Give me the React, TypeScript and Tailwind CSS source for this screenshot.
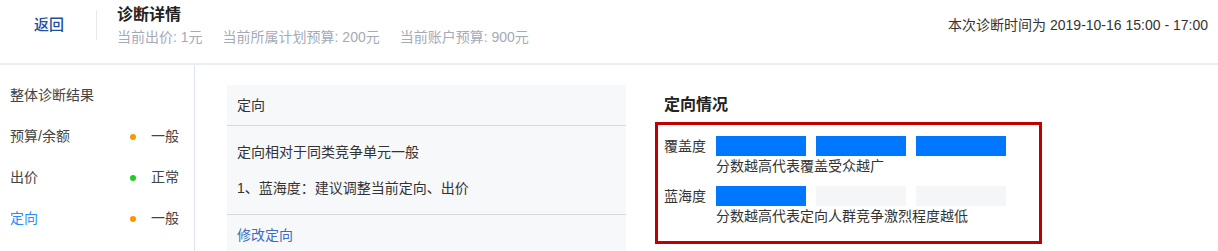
import React from 'react'

const font = { fontFamily: '"Liberation Sans", "Noto Sans CJK SC", sans-serif' }

type Level = 'normal' | 'warn'

const sideItems: { label: string; status?: string; level?: Level; active?: boolean }[] = [
    { label: '整体诊断结果' },
    { label: '预算/余额', status: '一般', level: 'warn' },
    { label: '出价', status: '正常', level: 'normal' },
    { label: '定向', status: '一般', level: 'warn', active: true },
]

const ScoreRow: React.FunctionComponent<{ label: string; filled: number; caption: string }> = ({
    label,
    filled,
    caption,
}) => (
    <div>
        <div className="flex items-center">
            <span className="w-[52px] text-[14px] leading-[20px] text-[#333]">{label}</span>
            <div className="flex gap-[10px]">
                {[0, 1, 2].map(i => (
                    <div key={i} className={i < filled ? 'h-[20px] w-[90px] bg-[#0077ff]' : 'h-[20px] w-[90px] bg-[#f5f6f8]'} />
                ))}
            </div>
        </div>
        <div className="ml-[52px] text-[14px] leading-[20px] text-[#333]">{caption}</div>
    </div>
)

export default function App() {
    return (
        <div className="h-[251px] w-[1218px] overflow-hidden bg-white" style={font}>
            {/* top bar */}
            <div className="h-[65px] border-b-2 border-[#e9edf4]">
                <div className="flex h-[50px] items-center">
                    <div className="flex w-[96px] justify-center pl-[2px] text-[15px] font-medium text-[#1e4fa1]">返回</div>
                    <div className="h-[30px] w-px bg-[#e6e8ec]" />
                    <div className="flex-1 self-start pl-[20px] pt-[4px]">
                        <div className="text-[16px] font-semibold leading-[22px] text-[#222]">诊断详情</div>
                        <div className="mt-[1px] flex gap-[20px] text-[14px] leading-[20px] text-[#a3abb8]">
                            <span>当前出价: 1元</span>
                            <span>当前所属计划预算: 200元</span>
                            <span>当前账户预算: 900元</span>
                        </div>
                    </div>
                    <div className="pr-[10px] text-[14px] text-[#333]">本次诊断时间为 2019-10-16 15:00 - 17:00</div>
                </div>
            </div>

            <div className="flex">
                {/* side nav */}
                <div className="h-[186px] w-[195px] border-r border-[#dde3ee] pl-[10px] pt-[10px]">
                    {sideItems.map(item => (
                        <div key={item.label} className="flex h-[41px] items-center text-[14px]">
                            <span className={item.active ? 'w-[120px] text-[#1f8fff]' : 'w-[120px] text-[#444]'}>
                                {item.label}
                            </span>
                            {item.status && (
                                <>
                                    <span
                                        className={
                                            item.level === 'normal'
                                                ? 'h-[6px] w-[6px] rounded-full bg-[#1fcc1f]'
                                                : 'h-[6px] w-[6px] rounded-full bg-[#ff9500]'
                                        }
                                    />
                                    <span className="ml-[15px] text-[#444]">{item.status}</span>
                                </>
                            )}
                        </div>
                    ))}
                </div>

                {/* suggestion card */}
                <div className="ml-[32px] mt-[20px] w-[399px] self-start bg-[#f7f8fa] text-[14px] text-[#333]">
                    <div className="flex h-[41px] items-center border-b border-[#d9d9d9] px-[10px]">定向</div>
                    <div className="border-b border-[#d9d9d9] px-[10px] pb-[16px] pt-[16px] leading-[20px]">
                        <div>定向相对于同类竞争单元一般</div>
                        <div className="mt-[16px]">1、蓝海度：建议调整当前定向、出价</div>
                    </div>
                    <div className="px-[10px] pb-[20px] pt-[10px] leading-[20px] text-[#3a6dc0]">修改定向</div>
                </div>

                {/* targeting overview */}
                <div className="ml-[29px] pt-[29px]">
                    <div className="pl-[9px] text-[16px] font-semibold leading-[22px] text-[#222]">定向情况</div>
                    <div className="mt-[6px] h-[122px] w-[387px] border-[3px] border-[#c00000] pl-[6px] pt-[11px]">
                        <ScoreRow label="覆盖度" filled={3} caption="分数越高代表覆盖受众越广" />
                        <div className="mt-[10px]">
                            <ScoreRow label="蓝海度" filled={1} caption="分数越高代表定向人群竞争激烈程度越低" />
                        </div>
                    </div>
                </div>
            </div>
        </div>
    )
}
